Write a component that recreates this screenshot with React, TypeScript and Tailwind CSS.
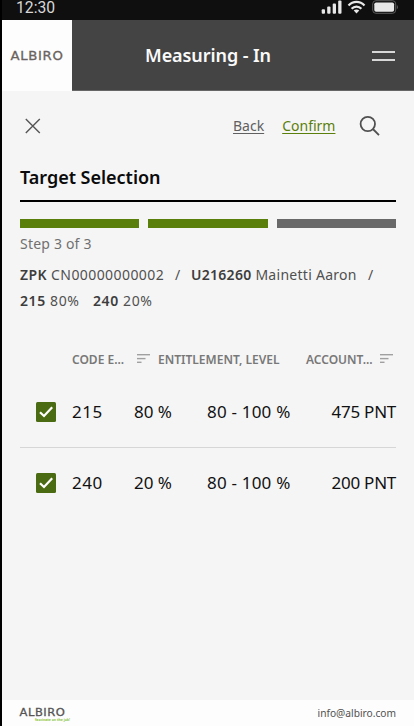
import clsx from "clsx";

type Row = { code: string; share: string; level: string; account: string };

const ROWS: Row[] = [
  { code: "215", share: "80 %", level: "80 - 100 %", account: "475 PNT" },
  { code: "240", share: "20 %", level: "80 - 100 %", account: "200 PNT" },
];

const STEPS = [true, true, false];

export default function App() {
  return (
    <div className="flex flex-col w-[414px] h-[726px] overflow-hidden border-l-2 border-black bg-[#f5f5f5] font-['Noto_Sans',sans-serif] whitespace-nowrap">
      <StatusBar />
      <Header />
      <main className="flex-1 pl-[18px] pr-[18px]">
        <Toolbar />
        <h2 className="h-[46px] border-b-2 border-black pt-[9px] text-[18px] leading-[24px] font-semibold tracking-[-0.02px] text-[#0b0b0b]">
          Target Selection
        </h2>
        <div className="grid grid-cols-3 gap-[9px] pt-[17px]">
          {STEPS.map((done, i) => (
            <div key={i} className={clsx("h-[9px]", done ? "bg-[#5b7f0b]" : "bg-[#696969]")} />
          ))}
        </div>
        <p className="mt-[6px] text-[14px] leading-[20px] tracking-[0.2px] text-[#707070]">Step 3 of 3</p>
        <Summary />
        <Table />
      </main>
      <footer className="flex items-center justify-between h-[26px] bg-[#fdfdfd] pl-[17px] pr-[18px]">
        <FooterLogo />
        <span className="text-[10.2px] leading-[14px] text-[#505050]">info@albiro.com</span>
      </footer>
    </div>
  );
}

function StatusBar() {
  return (
    <div className="flex h-[20px] shrink-0 justify-between bg-[#0f0f0f] pl-[14px] pr-[15px]">
      <span className="h-[16px] font-[Roboto,sans-serif] text-[15.7px] leading-[16px] text-[#d8d8d8]">12:30</span>
      <svg width="78" height="20" viewBox="0 0 78 20" fill="#e8e8e8">
        <rect x="0.7" y="9.3" width="3.3" height="4.4" rx="1" />
        <rect x="6.2" y="6.6" width="3.3" height="7.1" rx="1" />
        <rect x="11.7" y="3.6" width="3.3" height="10.1" rx="1" />
        <rect x="17.2" y="0.5" width="3.3" height="13.2" rx="1" />
        <g fill="none" stroke="#e8e8e8" strokeWidth="2.2">
          <path d="M27.5 5.6C32 0.7 39 0.7 43.5 5.6" />
          <path d="M30.6 8.7C33.3 5.8 37.7 5.8 40.4 8.7" />
        </g>
        <path d="M32.7 10.6C34.3 9.2 36.7 9.2 38.3 10.6L35.5 13.6Z" />
        <rect x="51.7" y="0.7" width="23" height="12.6" rx="3.2" fill="none" stroke="#5c5c5c" />
        <rect x="53.3" y="2.4" width="19.8" height="9.3" rx="1.8" />
        <path d="M75.8 5V9.3C77.3 8.7 77.3 5.6 75.8 5Z" fill="#5c5c5c" />
      </svg>
    </div>
  );
}

function Header() {
  return (
    <header className="flex h-[71px] shrink-0 items-center border-b border-[#666] bg-[#444]">
      <div className="flex h-[71px] w-[70px] items-center justify-center self-start bg-[#fdfdfe]">
        <svg width="54" height="14" viewBox="0 0 54 14">
          <text x="0.5" y="11.2" textLength="53" lengthAdjust="spacingAndGlyphs" stroke="#6a625c" strokeWidth="0.3" className="fill-[#6a625c] font-['DejaVu_Sans',sans-serif] text-[12px] tracking-[0.6px]">
            ALBIRO
          </text>
        </svg>
      </div>
      <h1 className="ml-[73px] text-[18px] leading-[24px] font-semibold tracking-[-0.08px] text-[#fafafa]">Measuring - In</h1>
      <button type="button" aria-label="Menu" className="ml-auto mr-[19px] mt-[1px] flex h-[10px] w-[23px] flex-col justify-between">
        <span className="h-[2px] w-full bg-[#d8d8d8]" />
        <span className="h-[2px] w-full bg-[#d8d8d8]" />
      </button>
    </header>
  );
}

function Toolbar() {
  return (
    <div className="flex h-[65px] items-center pr-[16px] pt-[5px]">
      <svg width="26" height="26" viewBox="0 0 26 26" fill="none" stroke="#555" strokeWidth="1.4">
        <path d="M5.8 6L19.8 20M19.8 6L5.8 20" />
      </svg>
      <a className="ml-[187px] text-[14px] leading-[20px] text-[#606060] underline underline-offset-2">Back</a>
      <a className="ml-[18px] text-[14px] leading-[20px] text-[#5b7f0b] underline underline-offset-2">Confirm</a>
      <svg className="ml-auto" width="22" height="22" viewBox="0 0 22 22" fill="none" stroke="#505050" strokeWidth="1.8">
        <circle cx="9.8" cy="9" r="7.2" />
        <path d="M14.9 14L21 20.2" />
      </svg>
    </div>
  );
}

function Summary() {
  return (
    <div className="mt-[8px] text-[14px] leading-[26px] text-[#505050]">
      <div className="flex">
        <span className="w-[145px] tracking-[0.42px]"><b className="font-semibold text-[#3d3d3d]">ZPK</b> CN00000000002</span>
        <span className="ml-[10px] w-[16px]">/</span>
        <span className="w-[167px] tracking-[0.28px]"><b className="font-semibold text-[#3d3d3d]">U216260</b> Mainetti Aaron</span>
        <span className="ml-[10px]">/</span>
      </div>
      <div className="flex tracking-[0.6px]">
        <span className="w-[73px]"><b className="font-semibold text-[#3d3d3d]">215</b> 80%</span>
        <span><b className="font-semibold text-[#3d3d3d]">240</b> 20%</span>
      </div>
    </div>
  );
}

function Table() {
  return (
    <div className="mt-[35px]">
      <div className="flex h-[22px] items-center text-[12px] font-semibold text-[#787878]">
        <span className="ml-[52px] w-[65px]">CODE E...</span>
        <SortIcon />
        <span className="ml-[8px] w-[148px]">ENTITLEMENT, LEVEL</span>
        <span className="w-[74px]">ACCOUNT...</span>
        <SortIcon />
      </div>
      <div className="pt-[6px]">
        {ROWS.map((row, i) => (
          <div
            key={row.code}
            className={clsx(
              "flex items-center text-[17px] text-[#111]",
              i === 0 ? "h-[71px] border-b border-[#d6d6d6]" : "h-[70px]"
            )}
          >
            <Checkbox />
            <span className="ml-[16px] w-[62px] tracking-[0.5px]">{row.code}</span>
            <span className="w-[73px]">{row.share}</span>
            <span className="tracking-[0.2px]">{row.level}</span>
            <span className="ml-auto tracking-[-0.25px]">{row.account}</span>
          </div>
        ))}
      </div>
    </div>
  );
}

function Checkbox() {
  return (
    <svg className="ml-[16px]" width="20" height="20" viewBox="0 0 20 20">
      <rect width="20" height="20" rx="1.5" fill="#4b6b12" />
      <path d="M4 10.2L8 14L16.2 5.3" fill="none" stroke="#fff" strokeWidth="2.2" />
    </svg>
  );
}

function SortIcon() {
  return (
    <svg className="mb-[2px]" width="13" height="10" viewBox="0 0 13 10" fill="#a0a0a0">
      <rect width="13" height="1.4" />
      <rect y="3.9" width="8.5" height="1.4" />
      <rect y="7.6" width="4.5" height="1.4" />
    </svg>
  );
}

function FooterLogo() {
  return (
    <svg width="56" height="22" viewBox="0 0 56 22">
      <text x="0.5" y="14" textLength="46" lengthAdjust="spacingAndGlyphs" stroke="#555" strokeWidth="0.3" className="fill-[#555] font-['DejaVu_Sans',sans-serif] text-[10.5px] tracking-[0.5px]">
        ALBIRO
      </text>
      <text x="16" y="18.8" textLength="35" lengthAdjust="spacingAndGlyphs" className="fill-[#8cc63f] font-['Noto_Sans',sans-serif] text-[4px] font-bold">
        fascinate on the job!
      </text>
    </svg>
  );
}
